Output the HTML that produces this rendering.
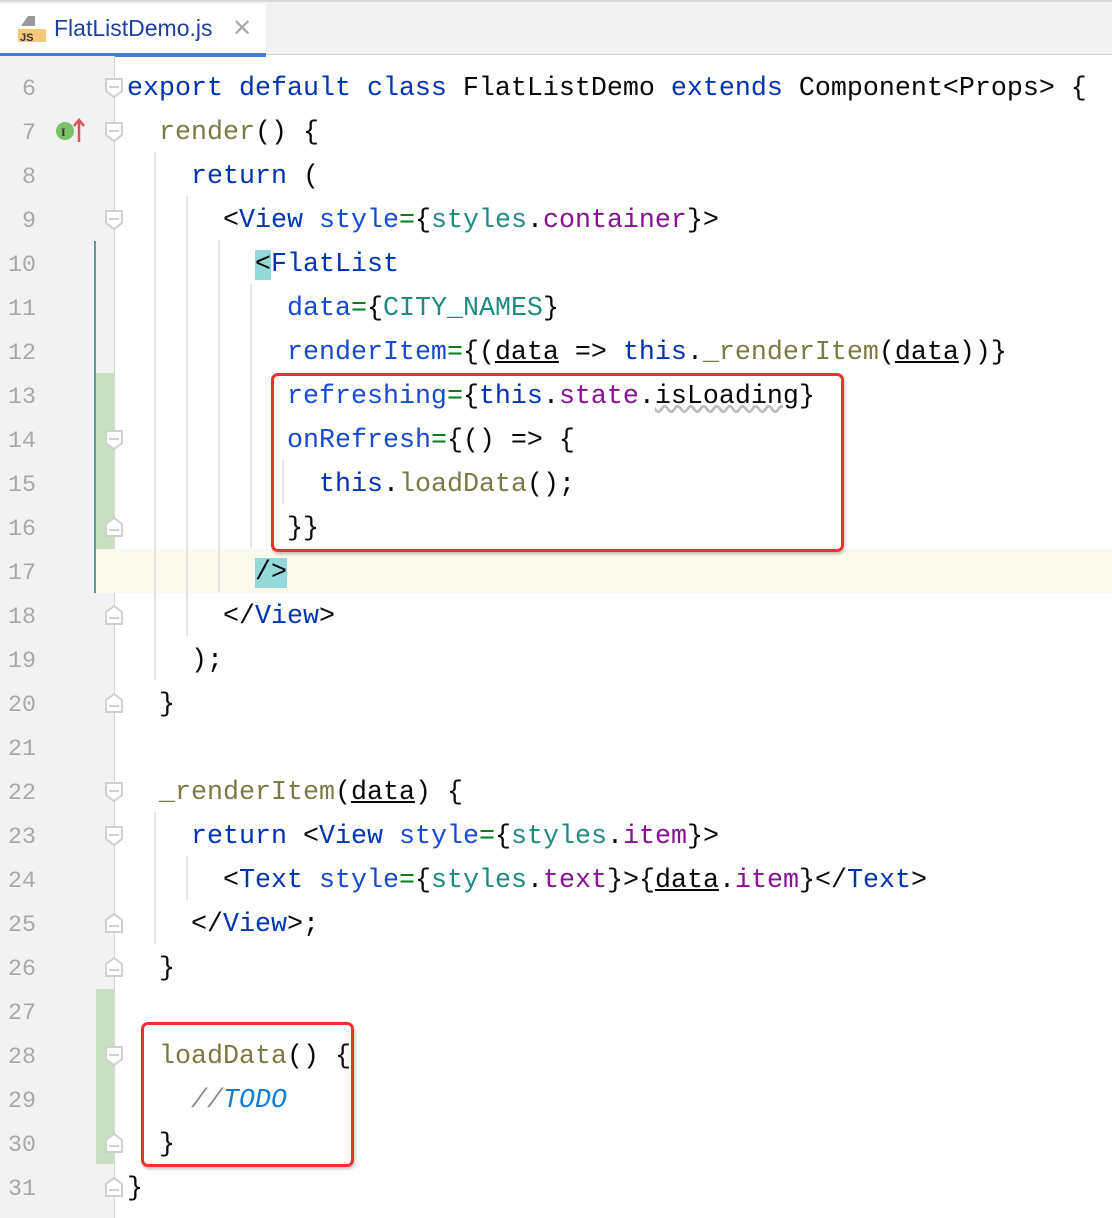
<!DOCTYPE html>
<html><head><meta charset="utf-8"><style>
*{margin:0;padding:0;box-sizing:border-box}
body{width:1112px;height:1218px;overflow:hidden;background:#fff;position:relative;font-family:"Liberation Mono",monospace}
.tabbar{position:absolute;left:0;top:0;width:1112px;height:55px;background:#f2f2f2;border-top:2px solid #d8d8d8;border-bottom:1px solid #d0d0d0}
.tab{position:absolute;left:0;top:2px;width:266px;height:53px;background:#fff;border-bottom:4px solid #4083c9}
.tab .name{position:absolute;left:54px;top:11px;font-family:"Liberation Sans",sans-serif;font-size:23px;color:#1f3f9f}
.tab .x{position:absolute;left:232px;top:10px;font-family:"Liberation Sans",sans-serif;font-size:24px;color:#aaa}
.gutter{position:absolute;left:0;top:56px;width:115px;height:1162px;background:#f2f2f2;border-right:1px solid #d6d6d6}
.ln{position:absolute;left:8px;font-size:23.3px;color:#a8a8a8;height:44px;line-height:44px;margin-top:2px}
.code{position:absolute;left:127px;font-size:26.67px;height:44px;line-height:44px;white-space:pre;color:#080808;margin-top:2px}
.k{color:#0033b3}.f{color:#7a7a43}.a{color:#174ad4}.g{color:#067d17}.p{color:#871094}.c{color:#1f8a80}.t{color:#0033b3}
.u{text-decoration:underline}
.cm{color:#8c8c8c;font-style:italic}.todo{color:#0f7fd6;font-style:italic}
.hl{background:#93d9d9}
.guide{position:absolute;width:2px;background:#e4e4e4}
.box{position:absolute;border:3px solid #f0302a;border-radius:7px;box-shadow:1px 2px 3px rgba(0,0,0,.25)}
</style></head><body>
<div class="tabbar"><div class="tab">
<svg style="position:absolute;left:16px;top:12px" width="32" height="32" viewBox="0 0 32 32"><path d="M12 0h7v10H5z" fill="#999"/><rect x="2" y="13" width="28" height="13" fill="#f6c87a"/><text x="4" y="25" font-family="Liberation Sans" font-size="11" font-weight="bold" fill="#333">JS</text></svg>
<span class="name">FlatListDemo.js</span><span class="x">✕</span></div></div>
<div class="gutter"></div>
<div style="position:absolute;left:95px;top:549px;width:1017px;height:44px;background:#fcfaec"></div>
<div style="position:absolute;left:96px;top:373px;width:18px;height:176px;background:#c9dfc1"></div>
<div style="position:absolute;left:96px;top:989px;width:18px;height:175px;background:#c9dfc1"></div>
<div style="position:absolute;left:94px;top:241px;width:2px;height:352px;background:#5f9a96"></div>
<div class="guide" style="left:154px;top:152px;height:528px"></div>
<div class="guide" style="left:154px;top:812px;height:132px"></div>
<div class="guide" style="left:186px;top:196px;height:440px"></div>
<div class="guide" style="left:186px;top:856px;height:44px"></div>
<div class="guide" style="left:218px;top:240px;height:352px"></div>
<div class="guide" style="left:250px;top:284px;height:264px"></div>
<div class="guide" style="left:282px;top:460px;height:44px"></div>
<svg style="position:absolute;left:0;top:0" width="130" height="1218">
<g fill="#fff" stroke="#cfcfcf" stroke-width="2">
<path d="M106 79h16v12l-8 6l-8-6z"/><path d="M106 123h16v12l-8 6l-8-6z"/><path d="M106 211h16v12l-8 6l-8-6z"/><path d="M106 431h16v12l-8 6l-8-6z"/><path d="M106 783h16v12l-8 6l-8-6z"/><path d="M106 827h16v12l-8 6l-8-6z"/><path d="M106 1047h16v12l-8 6l-8-6z"/>
<path d="M106 536h16v-12l-8-6l-8 6z"/><path d="M106 624h16v-12l-8-6l-8 6z"/><path d="M106 712h16v-12l-8-6l-8 6z"/><path d="M106 932h16v-12l-8-6l-8 6z"/><path d="M106 976h16v-12l-8-6l-8 6z"/><path d="M106 1152h16v-12l-8-6l-8 6z"/><path d="M106 1196h16v-12l-8-6l-8 6z"/>
</g>
<g stroke="#cfcfcf" stroke-width="2"><path d="M109 87h10M109 131h10M109 219h10M109 439h10M109 791h10M109 835h10M109 1055h10M109 530h10M109 618h10M109 706h10M109 926h10M109 970h10M109 1146h10M109 1190h10"/></g>
<circle cx="65" cy="131" r="9" fill="#7cc06a"/><text x="61" y="136" font-family="Liberation Serif" font-size="12" font-weight="bold" fill="#333">I</text>
<path d="M79 142V121M74 126l5-6l5 6" stroke="#e0505a" stroke-width="2.5" fill="none"/>
</svg>
<div class="ln" style="top:65px;left:22px">6</div><div class="ln" style="top:109px;left:22px">7</div><div class="ln" style="top:153px;left:22px">8</div><div class="ln" style="top:197px;left:22px">9</div>
<div class="ln" style="top:241px">10</div><div class="ln" style="top:285px">11</div><div class="ln" style="top:329px">12</div><div class="ln" style="top:373px">13</div><div class="ln" style="top:417px">14</div><div class="ln" style="top:461px">15</div><div class="ln" style="top:505px">16</div><div class="ln" style="top:549px">17</div><div class="ln" style="top:593px">18</div><div class="ln" style="top:637px">19</div><div class="ln" style="top:681px">20</div><div class="ln" style="top:725px">21</div><div class="ln" style="top:769px">22</div><div class="ln" style="top:813px">23</div><div class="ln" style="top:857px">24</div><div class="ln" style="top:901px">25</div><div class="ln" style="top:945px">26</div><div class="ln" style="top:989px">27</div><div class="ln" style="top:1033px">28</div><div class="ln" style="top:1077px">29</div><div class="ln" style="top:1121px">30</div><div class="ln" style="top:1165px">31</div>
<div class="code" style="top:65px"><span class="k">export default class</span> FlatListDemo <span class="k">extends</span> Component&lt;Props&gt; {</div>
<div class="code" style="top:109px">  <span class="f">render</span>() {</div>
<div class="code" style="top:153px">    <span class="k">return</span> (</div>
<div class="code" style="top:197px">      &lt;<span class="t">View</span> <span class="a">style</span><span class="g">=</span>{<span class="c">styles</span>.<span class="p">container</span>}&gt;</div>
<div class="code" style="top:241px">        <span class="hl">&lt;</span><span class="t">FlatList</span></div>
<div class="code" style="top:285px">          <span class="a">data</span><span class="g">=</span>{<span class="c">CITY_NAMES</span>}</div>
<div class="code" style="top:329px">          <span class="a">renderItem</span><span class="g">=</span>{(<span class="u">data</span> =&gt; <span class="k">this</span>.<span class="f">_renderItem</span>(<span class="u">data</span>))}</div>
<div class="code" style="top:373px">          <span class="a">refreshing</span><span class="g">=</span>{<span class="k">this</span>.<span class="p">state</span>.<span style="text-decoration:underline wavy #bbb">isLoading</span>}</div>
<div class="code" style="top:417px">          <span class="a">onRefresh</span><span class="g">=</span>{() =&gt; {</div>
<div class="code" style="top:461px">            <span class="k">this</span>.<span class="f">loadData</span>();</div>
<div class="code" style="top:505px">          }}</div>
<div class="code" style="top:549px">        <span class="hl">/&gt;</span></div>
<div class="code" style="top:593px">      &lt;/<span class="t">View</span>&gt;</div>
<div class="code" style="top:637px">    );</div>
<div class="code" style="top:681px">  }</div>
<div class="code" style="top:769px">  <span class="f">_renderItem</span>(<span class="u">data</span>) {</div>
<div class="code" style="top:813px">    <span class="k">return</span> &lt;<span class="t">View</span> <span class="a">style</span><span class="g">=</span>{<span class="c">styles</span>.<span class="p">item</span>}&gt;</div>
<div class="code" style="top:857px">      &lt;<span class="t">Text</span> <span class="a">style</span><span class="g">=</span>{<span class="c">styles</span>.<span class="p">text</span>}&gt;{<span class="u">data</span>.<span class="p">item</span>}&lt;/<span class="t">Text</span>&gt;</div>
<div class="code" style="top:901px">    &lt;/<span class="t">View</span>&gt;;</div>
<div class="code" style="top:945px">  }</div>
<div class="code" style="top:1033px">  <span class="f">loadData</span>() {</div>
<div class="code" style="top:1077px">    <span class="cm">//</span><span class="todo">TODO</span></div>
<div class="code" style="top:1121px">  }</div>
<div class="code" style="top:1165px">}</div>
<div class="box" style="left:271px;top:373px;width:573px;height:179px"></div>
<div class="box" style="left:141px;top:1022px;width:213px;height:145px"></div>
</body></html>
